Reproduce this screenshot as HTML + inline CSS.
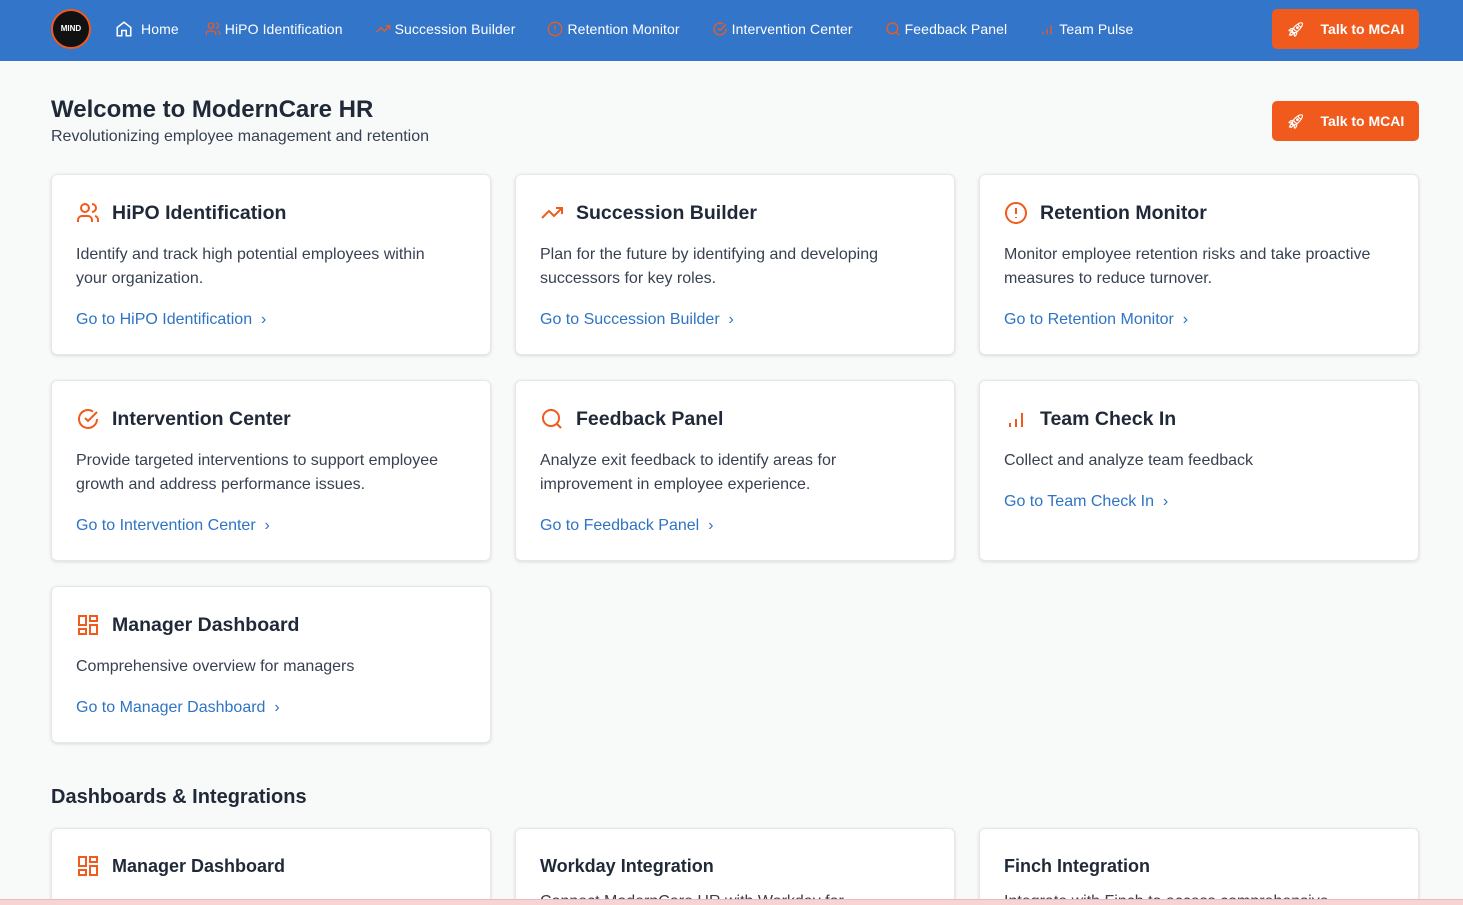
<!DOCTYPE html>
<html><head><meta charset="utf-8"><style>
*{box-sizing:border-box;margin:0;padding:0}
html{width:1463px;height:905px;overflow:hidden}
body{width:1463px;height:905px;overflow:hidden;background:#f8f9f9;font-family:"Liberation Sans",sans-serif;color:#1f2937;position:relative}
nav{height:61px;background:#3375c8;display:flex;align-items:center;padding-left:51px;position:relative;padding-bottom:4px}
.logo{width:40px;height:40px;border-radius:50%;background:#111;border:2px solid #f05a1d;color:#fff;font-size:8px;font-weight:bold;display:flex;align-items:center;justify-content:center;margin-right:24px}
.ni{display:flex;align-items:center;color:#fff;font-size:14px;font-weight:normal;margin-right:32px;letter-spacing:0.1px}
.ni svg{margin-right:4px}
.btn{position:absolute;right:44px;background:#f15a1d;color:#fff;font-size:14px;font-weight:bold;border-radius:5px;width:147px;height:40px;display:flex;align-items:center;justify-content:center;gap:16px}
h1{position:absolute;left:51px;top:96px;font-size:24px;font-weight:bold;color:#1f2937}
.sub{position:absolute;left:51px;top:128px;font-size:16px;color:#374151}
.card{position:absolute;width:440px;background:#fff;border:1px solid #e5e7eb;border-radius:6px;box-shadow:0 1px 3px rgba(0,0,0,.12);padding:24px}
.t{display:flex;align-items:center;font-size:19.5px;font-weight:bold;color:#1f2937;height:28px}
.t svg{margin-right:12px}
.d{margin-top:16px;font-size:16px;line-height:24px;color:#374151;max-width:368px}
.l{margin-top:20px;font-size:16px;color:#2f73c4}
h2{position:absolute;left:51px;top:786px;font-size:20px;font-weight:bold}
.bar{position:absolute;left:0;right:0;top:899px;height:6px;background:#f6d4d4;border-top:1px solid #f0b8b8;z-index:5}
</style></head><body>
<nav>
<div class="logo">MIND</div>
<div class="ni" style="margin-right:26px"><svg width="18" height="18" viewBox="0 0 24 24" fill="none" stroke="#fff" stroke-width="2"><path d="M3 10l9-7 9 7v11h-6v-7H9v7H3z"/></svg>&nbsp;Home</div>
<div class="ni"><svg width="16" height="16" viewBox="0 0 24 24" fill="none" stroke="#f05a1d" stroke-width="2"><circle cx="9" cy="7" r="4"/><path d="M2 21v-2a4 4 0 014-4h6a4 4 0 014 4v2M16 3a4 4 0 010 8M22 21v-2a4 4 0 00-3-4"/></svg>HiPO Identification</div>
<div class="ni"><svg width="16" height="16" viewBox="0 0 24 24" fill="none" stroke="#f05a1d" stroke-width="2"><path d="M2 17l7-7 5 5 8-8M16 7h6v6"/></svg>Succession Builder</div>
<div class="ni"><svg width="16" height="16" viewBox="0 0 24 24" fill="none" stroke="#f05a1d" stroke-width="2"><circle cx="12" cy="12" r="10"/><path d="M12 7v6M12 16v1"/></svg>Retention Monitor</div>
<div class="ni"><svg width="16" height="16" viewBox="0 0 24 24" fill="none" stroke="#f05a1d" stroke-width="2"><path d="M21 12a9 9 0 11-4-7.5M9 11l3 3 9-9"/></svg>Intervention Center</div>
<div class="ni"><svg width="16" height="16" viewBox="0 0 24 24" fill="none" stroke="#f05a1d" stroke-width="2"><circle cx="11" cy="11" r="8"/><path d="M21 21l-4-4"/></svg>Feedback Panel</div>
<div class="ni"><svg width="16" height="16" viewBox="0 0 24 24" fill="none" stroke="#f05a1d" stroke-width="2"><path d="M6 20v-4M12 20v-8M18 20V6"/></svg>Team Pulse</div>
<div class="btn" style="top:9px"><span>🚀︎</span>Talk to MCAI</div>
</nav>
<h1>Welcome to ModernCare HR</h1>
<div class="sub">Revolutionizing employee management and retention</div>
<div class="btn" style="top:101px;height:40px"><span>🚀︎</span>Talk to MCAI</div>

<div class="card" style="left:51px;top:174px;height:181px"><div class="t"><svg width="24" height="24" viewBox="0 0 24 24" fill="none" stroke="#f05a1d" stroke-width="2"><circle cx="9" cy="7" r="4"/><path d="M2 21v-2a4 4 0 014-4h6a4 4 0 014 4v2M16 3a4 4 0 010 8M22 21v-2a4 4 0 00-3-4"/></svg>HiPO Identification</div><div class="d">Identify and track high potential employees within your organization.</div><div class="l">Go to HiPO Identification &nbsp;›</div></div>
<div class="card" style="left:515px;top:174px;height:181px"><div class="t"><svg width="24" height="24" viewBox="0 0 24 24" fill="none" stroke="#f05a1d" stroke-width="2"><path d="M2 17l7-7 5 5 8-8M16 7h6v6"/></svg>Succession Builder</div><div class="d">Plan for the future by identifying and developing successors for key roles.</div><div class="l">Go to Succession Builder &nbsp;›</div></div>
<div class="card" style="left:979px;top:174px;height:181px"><div class="t"><svg width="24" height="24" viewBox="0 0 24 24" fill="none" stroke="#f05a1d" stroke-width="2"><circle cx="12" cy="12" r="10"/><path d="M12 7v6M12 16v1"/></svg>Retention Monitor</div><div class="d">Monitor employee retention risks and take proactive measures to reduce turnover.</div><div class="l">Go to Retention Monitor &nbsp;›</div></div>

<div class="card" style="left:51px;top:380px;height:181px"><div class="t"><svg width="24" height="24" viewBox="0 0 24 24" fill="none" stroke="#f05a1d" stroke-width="2"><path d="M21 12a9 9 0 11-4-7.5M9 11l3 3 9-9"/></svg>Intervention Center</div><div class="d">Provide targeted interventions to support employee growth and address performance issues.</div><div class="l">Go to Intervention Center &nbsp;›</div></div>
<div class="card" style="left:515px;top:380px;height:181px"><div class="t"><svg width="24" height="24" viewBox="0 0 24 24" fill="none" stroke="#f05a1d" stroke-width="2"><circle cx="11" cy="11" r="8"/><path d="M21 21l-4-4"/></svg>Feedback Panel</div><div class="d">Analyze exit feedback to identify areas for improvement in employee experience.</div><div class="l">Go to Feedback Panel &nbsp;›</div></div>
<div class="card" style="left:979px;top:380px;height:181px"><div class="t"><svg width="24" height="24" viewBox="0 0 24 24" fill="none" stroke="#f05a1d" stroke-width="2"><path d="M6 20v-4M12 20v-8M18 20V6"/></svg>Team Check In</div><div class="d">Collect and analyze team feedback</div><div class="l">Go to Team Check In &nbsp;›</div></div>

<div class="card" style="left:51px;top:586px;height:157px"><div class="t"><svg width="24" height="24" viewBox="0 0 24 24" fill="none" stroke="#f05a1d" stroke-width="2"><rect x="3" y="3" width="7" height="9"/><rect x="14" y="3" width="7" height="5"/><rect x="14" y="12" width="7" height="9"/><rect x="3" y="16" width="7" height="5"/></svg>Manager Dashboard</div><div class="d">Comprehensive overview for managers</div><div class="l">Go to Manager Dashboard &nbsp;›</div></div>

<h2>Dashboards &amp; Integrations</h2>
<div class="card" style="left:51px;top:828px;height:77px;padding-top:23px;border-bottom:none;border-radius:6px 6px 0 0"><div class="t" style="font-size:18px"><svg width="24" height="24" viewBox="0 0 24 24" fill="none" stroke="#f05a1d" stroke-width="2"><rect x="3" y="3" width="7" height="9"/><rect x="14" y="3" width="7" height="5"/><rect x="14" y="12" width="7" height="9"/><rect x="3" y="16" width="7" height="5"/></svg>Manager Dashboard</div></div>
<div class="card" style="left:515px;top:828px;height:77px;padding-top:23px;border-bottom:none;border-radius:6px 6px 0 0;overflow:hidden"><div class="t" style="font-size:18px">Workday Integration</div><div class="d" style="margin-top:10px">Connect ModernCare HR with Workday for seamless</div></div>
<div class="card" style="left:979px;top:828px;height:77px;padding-top:23px;border-bottom:none;border-radius:6px 6px 0 0;overflow:hidden"><div class="t" style="font-size:18px">Finch Integration</div><div class="d" style="margin-top:10px">Integrate with Finch to access comprehensive</div></div>
<div class="bar"></div>
</body></html>
